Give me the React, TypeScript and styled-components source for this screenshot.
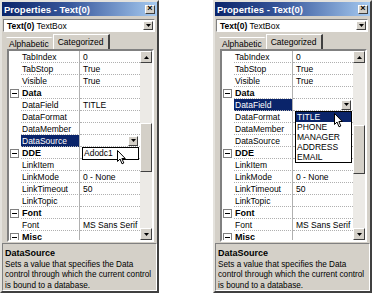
import React from 'react'
import styled, { createGlobalStyle } from 'styled-components'

const GlobalStyle = createGlobalStyle`
  body {
    margin: 0;
    background: #fff;
    font-family: "Liberation Sans", Arial, sans-serif;
  }
`

const Page = styled.div`
  display: flex;
  gap: 54px;
  width: 374px;
  height: 298px;
  overflow: hidden;
`

const Window = styled.div`
  position: relative;
  width: 159px;
  height: 293px;
  box-sizing: border-box;
  background: #d4d0c8;
  border: 2px solid;
  border-color: #e4e2dd #404040 #404040 #e4e2dd;
  display: flex;
  flex-direction: column;
  font-size: 8.5px;
  color: #000;
`

const TitleBar = styled.div`
  height: 14px;
  flex-shrink: 0;
  display: flex;
  align-items: center;
  justify-content: space-between;
  padding: 0 2px 0 2px;
  background: linear-gradient(to right, #0a246a 0%, #3a5a9e 45%, #a6caf0 100%);
  color: #fff;
  font-weight: bold;
  font-size: 9.5px;
`

const SmallButton = styled.div<{ $w?: number; $h?: number }>`
  width: ${p => p.$w ?? 10}px;
  height: ${p => p.$h ?? 9}px;
  box-sizing: border-box;
  background: #d4d0c8;
  border: 1px solid;
  border-color: #fff #404040 #404040 #fff;
  display: flex;
  align-items: center;
  justify-content: center;
  flex-shrink: 0;
`

const CloseGlyph = styled.span`
  color: #000;
  font-size: 9px;
  line-height: 1;
  font-weight: bold;
  margin-top: -1px;
`

const Combo = styled.div`
  height: 13px;
  margin: 3px 2px 0 1px;
  box-sizing: border-box;
  background: #fff;
  border: 1px solid;
  border-color: #808080 #fff #fff #808080;
  display: flex;
  align-items: center;
  justify-content: space-between;
  padding: 0 1px 0 3px;
`

const ComboText = styled.span`
  font-size: 8.5px;
  white-space: nowrap;
  b { font-weight: bold; }
`

const Tabs = styled.div`
  height: 15px;
  margin-top: 2px;
  display: flex;
  align-items: flex-end;
  padding-left: 4px;
`

const Tab = styled.div<{ $active?: boolean }>`
  height: ${p => (p.$active ? 15 : 12)}px;
  box-sizing: border-box;
  padding: 0 ${p => (p.$active ? 4 : 2)}px;
  display: flex;
  align-items: center;
  border-top: 1px solid #fff;
  border-left: 1px solid ${p => (p.$active ? '#fff' : 'transparent')};
  border-right: 2px solid ${p => (p.$active ? '#404040' : 'transparent')};
  white-space: nowrap;
`

const Grid = styled.div`
  height: 193px;
  margin: 0 3px 0 5px;
  box-sizing: border-box;
  border: 2px solid;
  border-color: #808080 #fff #fff #808080;
  display: flex;
  background: #fff;
  flex-shrink: 0;
`

const Rows = styled.div`
  flex: 1;
  overflow: hidden;
`

const Row = styled.div`
  display: grid;
  grid-template-columns: 12px 59px 60px;
  height: 12px;
`

const Gutter = styled.div`
  display: flex;
  align-items: center;
  padding-left: 1px;
  box-sizing: border-box;
`

const Expander = styled.div`
  width: 9px;
  height: 9px;
  box-sizing: border-box;
  border: 1px solid #808080;
  background: #fff;
  display: flex;
  align-items: center;
  justify-content: center;
  &::after {
    content: '';
    width: 5px;
    height: 1px;
    background: #000;
  }
`

const NameCell = styled.div<{ $selected?: boolean; $cat?: boolean }>`
  box-sizing: border-box;
  padding-left: 1px;
  display: flex;
  align-items: center;
  white-space: nowrap;
  overflow: hidden;
  border-bottom: 1px dotted #b0b0b0;
  border-right: 1px solid #b0b0b0;
  background: ${p => (p.$selected ? '#0a246a' : 'transparent')};
  color: ${p => (p.$selected ? '#fff' : '#000')};
  font-weight: ${p => (p.$cat ? 'bold' : 'normal')};
  font-size: ${p => (p.$cat ? 9 : 8.5)}px;
`

const ValueCell = styled.div`
  position: relative;
  box-sizing: border-box;
  padding: 0 2px 0 3px;
  display: flex;
  align-items: center;
  justify-content: space-between;
  white-space: nowrap;
  border-bottom: 1px dotted #b0b0b0;
`

const DropList = styled.div<{ $top: number }>`
  position: absolute;
  top: ${p => p.$top}px;
  left: 2px;
  width: 57px;
  box-sizing: border-box;
  border: 1px solid #000;
  background: #fff;
  z-index: 2;
`

const DropItem = styled.div<{ $hl?: boolean; $h: number }>`
  height: ${p => p.$h}px;
  line-height: ${p => p.$h}px;
  padding-left: 1px;
  background: ${p => (p.$hl ? '#0a246a' : '#fff')};
  color: ${p => (p.$hl ? '#fff' : '#000')};
`

const Scrollbar = styled.div`
  width: 12px;
  display: flex;
  flex-direction: column;
  background: #eceae6;
`

const Track = styled.div`
  flex: 1;
`

const Thumb = styled.div<{ $top: number; $h: number }>`
  margin-top: ${p => p.$top}px;
  height: ${p => p.$h}px;
  box-sizing: border-box;
  background: #d4d0c8;
  border: 1px solid;
  border-color: #fff #404040 #404040 #fff;
`

const Description = styled.div`
  height: 48px;
  margin-top: 1px;
  box-sizing: border-box;
  border: 1px solid;
  border-color: #808080 #fff #fff #808080;
  padding: 4px 0 0 2px;
  font-size: 8.2px;
  line-height: 10.5px;
  white-space: nowrap;
  overflow: hidden;
`

const DescTitle = styled.div`
  font-weight: bold;
  font-size: 9px;
  margin-bottom: 1px;
`

const CursorWrap = styled.div<{ $x: number; $y: number }>`
  position: absolute;
  left: ${p => p.$x}px;
  top: ${p => p.$y}px;
  z-index: 5;
  line-height: 0;
`

type Prop = { name: string; value?: string; cat?: boolean }

const props: Prop[] = [
  { name: 'TabIndex', value: '0' },
  { name: 'TabStop', value: 'True' },
  { name: 'Visible', value: 'True' },
  { name: 'Data', cat: true },
  { name: 'DataField', value: 'TITLE' },
  { name: 'DataFormat' },
  { name: 'DataMember' },
  { name: 'DataSource' },
  { name: 'DDE', cat: true },
  { name: 'LinkItem' },
  { name: 'LinkMode', value: '0 - None' },
  { name: 'LinkTimeout', value: '50' },
  { name: 'LinkTopic' },
  { name: 'Font', cat: true },
  { name: 'Font', value: 'MS Sans Serif' },
  { name: 'Misc', cat: true },
]

const Arrow = ({ down }: { down?: boolean }) => (
  <svg width="5" height="3" viewBox="0 0 5 3">
    <path d={down ? 'M0 0 H5 L2.5 3 Z' : 'M0 3 H5 L2.5 0 Z'} fill="#000" />
  </svg>
)

const Cursor = ({ x, y }: { x: number; y: number }) => (
  <CursorWrap $x={x} $y={y}>
    <svg width="10" height="15" viewBox="0 0 10 15">
      <path
        d="M0.5 0.5 L0.5 11.5 L3 9 L5 13.8 L6.8 13 L4.9 8.5 L8.3 8.5 Z"
        fill="#fff"
        stroke="#000"
        strokeWidth="1"
        strokeLinejoin="miter"
      />
    </svg>
  </CursorWrap>
)

type PanelProps = {
  editing: string
  items: string[]
  highlight?: string
  itemHeight: number
  thumbTop: number
  cursor: { x: number; y: number }
}

const PropertiesWindow = ({ editing, items, highlight, itemHeight, thumbTop, cursor }: PanelProps) => (
  <Window>
    <TitleBar>
      <span>Properties - Text(0)</span>
      <SmallButton $w={10} $h={9}>
        <CloseGlyph>×</CloseGlyph>
      </SmallButton>
    </TitleBar>
    <Combo>
      <ComboText>
        <b>Text(0)</b> TextBox
      </ComboText>
      <SmallButton $w={10} $h={9}>
        <Arrow down />
      </SmallButton>
    </Combo>
    <Tabs>
      <Tab>Alphabetic</Tab>
      <Tab $active>Categorized</Tab>
    </Tabs>
    <Grid>
      <Rows>
        {props.map((p, i) => {
          const isEditing = p.name === editing && !p.cat
          return (
            <Row key={i}>
              <Gutter>{p.cat && <Expander />}</Gutter>
              <NameCell $selected={isEditing} $cat={p.cat}>
                {p.name}
              </NameCell>
              <ValueCell>
                {isEditing ? (
                  <>
                    <span />
                    <SmallButton $w={10} $h={10}>
                      <Arrow down />
                    </SmallButton>
                    <DropList $top={12}>
                      {items.map(it => (
                        <DropItem key={it} $hl={it === highlight} $h={itemHeight}>
                          {it}
                        </DropItem>
                      ))}
                    </DropList>
                  </>
                ) : (
                  <span>{p.value}</span>
                )}
              </ValueCell>
            </Row>
          )
        })}
      </Rows>
      <Scrollbar>
        <SmallButton $w={12} $h={12}>
          <Arrow />
        </SmallButton>
        <Track>
          <Thumb $top={thumbTop} $h={49} />
        </Track>
        <SmallButton $w={12} $h={12}>
          <Arrow down />
        </SmallButton>
      </Scrollbar>
    </Grid>
    <Description>
      <DescTitle>DataSource</DescTitle>
      <div>Sets a value that specifies the Data</div>
      <div>control through which the current control</div>
      <div>is bound to a database.</div>
    </Description>
    <Cursor x={cursor.x} y={cursor.y} />
  </Window>
)

const App = () => (
  <>
    <GlobalStyle />
    <Page>
      <PropertiesWindow
        editing="DataSource"
        items={['Adodc1']}
        itemHeight={11}
        thumbTop={60}
        cursor={{ x: 115, y: 148 }}
      />
      <PropertiesWindow
        editing="DataField"
        items={['TITLE', 'PHONE', 'MANAGER', 'ADDRESS', 'EMAIL']}
        highlight="TITLE"
        itemHeight={10}
        thumbTop={62}
        cursor={{ x: 119, y: 111 }}
      />
    </Page>
  </>
)

export default App
